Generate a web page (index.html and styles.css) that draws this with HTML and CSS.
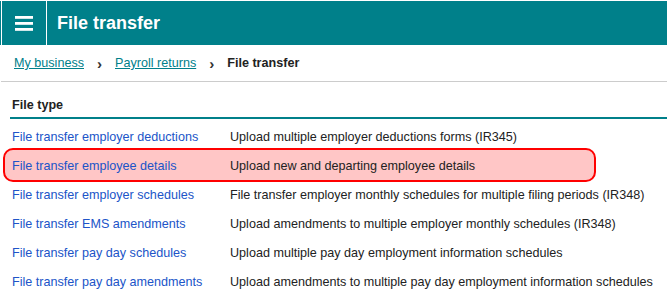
FILE: index.html
```html
<!DOCTYPE html>
<html lang="en">
<head>
    <meta charset="UTF-8">
    <meta name="viewport" content="width=device-width, initial-scale=1.0">
    <title>File transfer</title>
    <link rel="stylesheet" href="styles.css">
</head>
<body>
    <header class="topbar">
        <button class="menu-btn" aria-label="Menu">
            <span class="bar"></span>
            <span class="bar"></span>
            <span class="bar"></span>
        </button>
        <h1 class="title">File transfer</h1>
    </header>

    <nav class="crumbs">
        <a href="#">My business</a>
        <span class="sep">&#x203A;</span>
        <a href="#">Payroll returns</a>
        <span class="sep">&#x203A;</span>
        <strong>File transfer</strong>
    </nav>

    <section class="files">
        <h2 class="files__head">File type</h2>
        <div class="row">
            <a href="#">File transfer employer deductions</a>
            <span>Upload multiple employer deductions forms (IR345)</span>
        </div>
        <div class="row row--marked">
            <a href="#">File transfer employee details</a>
            <span>Upload new and departing employee details</span>
        </div>
        <div class="row">
            <a href="#">File transfer employer schedules</a>
            <span>File transfer employer monthly schedules for multiple filing periods (IR348)</span>
        </div>
        <div class="row">
            <a href="#">File transfer EMS amendments</a>
            <span>Upload amendments to multiple employer monthly schedules (IR348)</span>
        </div>
        <div class="row">
            <a href="#">File transfer pay day schedules</a>
            <span>Upload multiple pay day employment information schedules</span>
        </div>
        <div class="row">
            <a href="#">File transfer pay day amendments</a>
            <span>Upload amendments to multiple pay day employment information schedules</span>
        </div>
    </section>
</body>
</html>
```

FILE: styles.css
```css
* { box-sizing: border-box; }

body {
    margin: 0;
    padding-top: 1px;
    font-family: "Liberation Sans", Arial, sans-serif;
    font-size: 12.6px;
    color: #222;
    background: #fff;
}

/* teal top bar */
.topbar {
    display: flex;
    align-items: center;
    height: 44px;
    background: #00808a;
    padding-left: 1px;
}

.menu-btn {
    width: 46px;
    height: 44px;
    padding: 0;
    background: #00808a;
    border: none;
    border-left: 1px solid #fff;
    border-right: 1px solid #fff;
    display: flex;
    flex-direction: column;
    align-items: center;
    justify-content: center;
    gap: 3px;
}

.bar {
    display: block;
    width: 18px;
    height: 3px;
    background: linear-gradient(#fff 0, #fff 2px, #cfe6e8 2px);
}

.title {
    margin: 0 0 0 10px;
    font-size: 18px;
    font-weight: bold;
    color: #fff;
}

/* breadcrumb */
.crumbs {
    display: flex;
    align-items: center;
    height: 37px;
    padding-left: 13px;
    border-bottom: 1px solid #ccc;
    margin-left: 1px;
}

.crumbs a {
    color: #00808a;
    text-decoration: underline;
}

.crumbs .sep {
    margin: 0 13px 0 13px;
    font-weight: bold;
    font-size: 15px;
    color: #333;
}

.crumbs strong {
    color: #222;
}

/* file type table */
.files {
    margin-left: 10px;
}

.files__head {
    margin: 0;
    padding: 16px 0 5px 2px;
    font-size: 12.6px;
    font-weight: bold;
    color: #222;
    border-bottom: 2px solid #00808a;
}

.row {
    display: grid;
    grid-template-columns: 218px 1fr;
    align-items: center;
    height: 29px;
    padding: 6px 0 0 2px;
}

.row a {
    color: #2054c8;
    text-decoration: none;
}

.row--marked {
    position: relative;
}

.row--marked::before {
    content: "";
    position: absolute;
    left: -7px;
    top: 0;
    width: 589px;
    height: 30px;
    background: #ffc6c6;
    border: 2px solid #f00;
    border-radius: 10px;
    z-index: -1;
}
```
